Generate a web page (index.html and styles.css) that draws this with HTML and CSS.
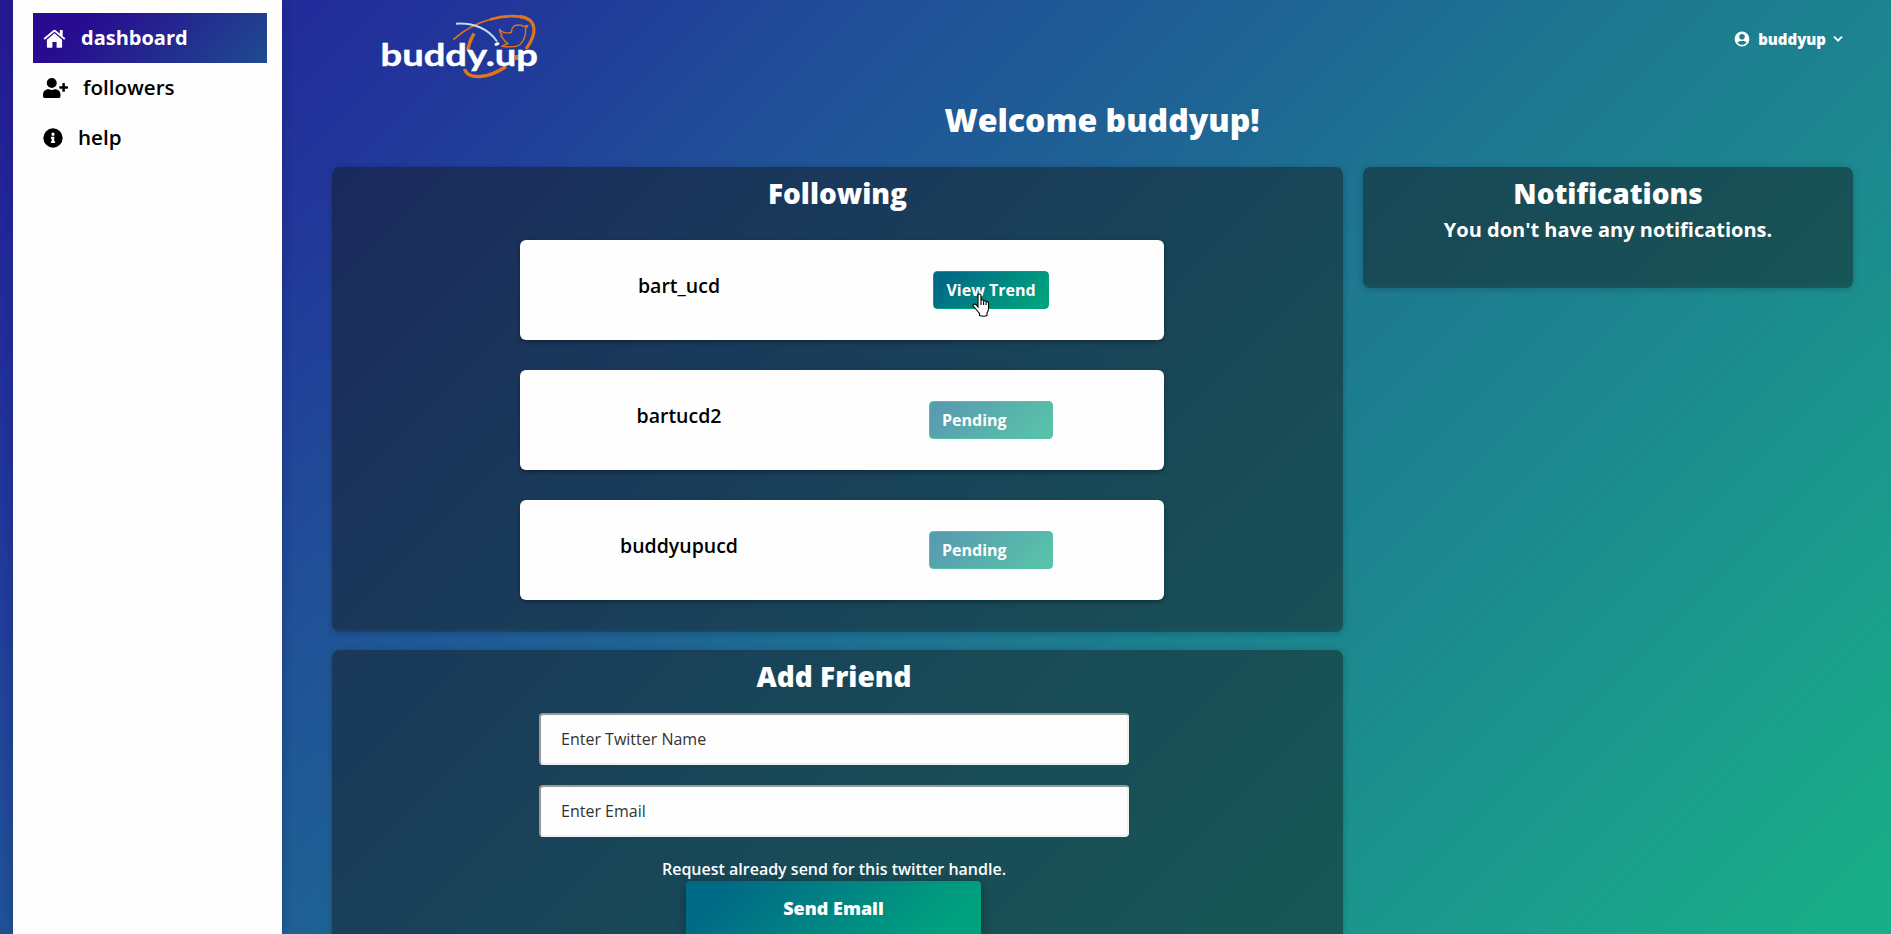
FILE: index.html
```html
<!DOCTYPE html>
<html lang="en">
<head>
<meta charset="utf-8">
<title>buddy.up</title>
<link rel="stylesheet" href="styles.css">
</head>
<body>
<div class="app">
  <nav class="sidebar">
    <a class="nav-item active"><svg class="home" viewBox="0 0 24 20"><path d="M12 4.600 4 11.400V19q0 .8.8.8h5v-6h4.400v6h5q.8 0 .8-.8v-7.600z"/><path d="M20.600 7.600V1h-3v4L13.300 1.300q-1.300-1-2.600 0L.5 9.800l1.300 1.600L12 2.900l10.200 8.500 1.300-1.600z"/></svg><span>dashboard</span></a>
    <a class="nav-item"><svg class="follow" viewBox="0 0 640 512"><path d="M624 208h-64v-64c0-8.800-7.200-16-16-16h-32c-8.800 0-16 7.200-16 16v64h-64c-8.800 0-16 7.200-16 16v32c0 8.800 7.200 16 16 16h64v64c0 8.800 7.200 16 16 16h32c8.800 0 16-7.200 16-16v-64h64c8.800 0 16-7.200 16-16v-32c0-8.800-7.200-16-16-16zM224 256a128 128 0 1 0 0-256 128 128 0 0 0 0 256zm89.600 32h-16.700a174 174 0 0 1-145.800 0h-16.700C60.200 288 0 348.200 0 422.400V464c0 26.500 21.500 48 48 48h352c26.500 0 48-21.500 48-48v-41.600c0-74.200-60.200-134.400-134.400-134.400z"/></svg><span>followers</span></a>
    <a class="nav-item"><svg class="info" viewBox="0 0 512 512"><path fill-rule="evenodd" d="M256 8a248 248 0 1 0 0 496 248 248 0 0 0 0-496zm0 110a42 42 0 1 1 0 84 42 42 0 0 1 0-84zm56 254c0 6.600-5.400 12-12 12h-88c-6.600 0-12-5.400-12-12v-24c0-6.600 5.400-12 12-12h12v-64h-12c-6.600 0-12-5.400-12-12v-24c0-6.600 5.400-12 12-12h64c6.600 0 12 5.400 12 12v100h12c6.600 0 12 5.400 12 12z"/></svg><span>help</span></a>
  </nav>
  <main class="content">
    <header class="topbar">
      <svg class="logo" viewBox="0 0 180 80">
        <g fill="none" stroke="#e0741f" stroke-linejoin="round">
          <path stroke-width="1.800" d="M13.300 39.700C25 29 40 22 52 19"/>
          <path stroke-width="2.600" d="M50 19.600C62 16 74 15.500 82 17"/>
          <path stroke-width="3.200" d="M80 16.600C98 19 97 34 86 49"/>
          <path stroke-width="3.500" d="M34 33.500C31 39 28.500 44 28 50M24.500 69C28 80 48 79 66 66.500M76.500 55v5"/>
          <path stroke-width="1.400" d="M59.600 29C61 32 65 33.500 71.500 32.500 71 27 75 24.500 79 25 82 25 83.500 26.500 84 26.500L88 25.500 85.500 28.500C86 36 84 41 80 44.500 76 48 68 47 62 46.200L68 43.500C65 42 64 40.500 63.500 39L61 36.500 62 35C60 33 59.500 31 59.600 29z"/>
        </g>
        <path fill="none" stroke="#b5e2f5" stroke-width="2" d="M16 23.700C34 22.500 49 29 57 41.500"/>
        <ellipse cx="57" cy="44" rx="2.600" ry="1.500" fill="#fff" transform="rotate(-20 57 44)"/>
        <text class="wordmark" x="-59.500" y="66" textLength="157.500" lengthAdjust="spacingAndGlyphs">buddy.up</text>
      </svg>
      <div class="user">
        <svg class="avatar" viewBox="0 0 16 16"><path fill-rule="evenodd" d="M8 .6a7.400 7.400 0 1 0 0 14.800A7.400 7.400 0 0 0 8 .6zM8 3a2.800 2.800 0 1 1 0 5.600A2.800 2.800 0 0 1 8 3zM3.500 11.500C4.500 10 6 9.900 8 9.900s3.500.1 4.500 1.600C11.500 13 9.800 13.800 8 13.800S4.500 13 3.500 11.500z"/></svg>
        <span>buddyup</span>
        <svg class="chevron" viewBox="0 0 10 8"><path d="M1 1.700l4 4 4-4"/></svg>
      </div>
    </header>
    <h1 class="welcome">Welcome buddyup!</h1>
    <div class="columns">
      <div class="primary">
        <section class="panel following">
          <h2>Following</h2>
          <ul class="friends">
            <li class="friend"><span class="name">bart_ucd</span><span class="action"><button class="btn">View Trend</button>
              <svg class="pointer" viewBox="0 0 18 24"><path d="M6 14V2.500Q6 1 7.400 1T9 2.500V8q0-1.200 1.300-1.200T11.600 8v.6q.2-1 1.300-.9t1.200 1.100v.6q.2-.9 1.200-.8t1.200 1.200V15q0 3-1.500 5v2.500Q12 24 7.500 22.500V20.500L5 17.500 1.300 13Q.7 11.500 2.200 11.200T4.500 12.200z"/><path d="M9 8v4M11.600 8.600V12M14.100 9.400V12"/></svg></span></li>
            <li class="friend"><span class="name">bartucd2</span><span class="action"><button class="btn pending" disabled>Pending</button></span></li>
            <li class="friend"><span class="name">buddyupucd</span><span class="action"><button class="btn pending" disabled>Pending</button></span></li>
          </ul>
        </section>
        <section class="panel add">
          <h2>Add Friend</h2>
          <form class="form">
            <input type="text" placeholder="Enter Twitter Name">
            <input type="text" placeholder="Enter Email">
            <p class="message">Request already send for this twitter handle.</p>
            <button class="send" type="button">Send Email</button>
          </form>
        </section>
      </div>
      <aside class="panel notifications">
        <h2>Notifications</h2>
        <p>You don't have any notifications.</p>
      </aside>
    </div>
  </main>
</div>
</body>
</html>
```
FILE: styles.css
```css
* { box-sizing: border-box; }
body {
  margin: 0;
  height: 934px;
  overflow: hidden;
  font-family: "Open Sans", sans-serif;
  background: linear-gradient(135deg, #251891 0%, #22299a 9%, #21369a 18%, #205098 32%, #1e6494 46%, #1d7890 58%, #1c858f 69%, #1a9e8c 87%, #18ae87 98%);
}
h1, h2, p, ul { margin: 0; padding: 0; }
.app { display: flex; height: 934px; padding-left: 13px; overflow: hidden; }

.sidebar {
  flex: none;
  width: 269px;
  padding: 13px 15px 0 20px;
  background: #fefefe;
  box-shadow: 0 0 10px rgba(20, 20, 60, .3);
}
.nav-item {
  display: flex;
  align-items: center;
  height: 50px;
  padding-left: 10px;
  font-size: 20.6px;
  font-weight: 600;
  color: #000;
}
.nav-item svg { fill: currentColor; flex: none; }
.nav-item span { position: relative; top: -1px; }
.nav-item.active {
  color: #fff;
  font-size: 20px;
  font-weight: 700;
  background: linear-gradient(135deg, #280b90 20%, #1e4c8f 100%);
}
.home { width: 23px; height: 19px; margin-right: 15px; }
.follow { width: 25px; height: 20px; margin-right: 15px; }
.info { width: 20px; height: 20px; margin-right: 15px; }

.content { flex: 1; min-width: 0; padding: 0 38px 0 50px; }
.topbar { display: flex; justify-content: space-between; height: 80px; }
.logo { width: 180px; height: 80px; margin-left: 108px; overflow: visible; }
.wordmark { font: 700 30px Lato, sans-serif; fill: #fff; stroke: #fff; stroke-width: .4; }
.user {
  display: flex;
  align-items: center;
  height: 78px;
  margin-right: 10px;
  color: #fff;
  font-size: 15px;
  font-weight: 800;
}
.avatar { width: 16px; height: 16px; margin-right: 8px; fill: #fff; }
.chevron { width: 10px; height: 8px; margin-left: 7px; fill: none; stroke: #fff; stroke-width: 1.9; }

.welcome {
  height: 87px;
  padding-top: 18px;
  margin: 0 -38px 0 -19px;
  font-size: 32px;
  line-height: 44px;
  font-weight: 800;
  text-align: center;
  color: #fff;
}
.columns { display: flex; align-items: flex-start; gap: 20px; }
.primary { width: 1011px; display: flex; flex-direction: column; gap: 18px; }
.panel {
  border-radius: 7px;
  background: rgba(20, 27, 30, .5);
  background-clip: padding-box;
  border-bottom: 3px solid rgba(22, 52, 60, .6);
  box-shadow: 0 1px 6px rgba(0, 0, 0, .2);
  color: #fff;
  text-align: center;
}
.panel h2 { padding-top: 7px; font-size: 28px; line-height: 38px; font-weight: 800; }
.following { height: 465px; }
.friends { width: 644px; margin: 28px auto 0 188px; display: flex; flex-direction: column; gap: 30px; }
.friend {
  display: grid;
  grid-template-columns: 318px 306px;
  height: 100px;
  background: #fefefe;
  border-radius: 6px;
  box-shadow: 0 2px 4px rgba(0, 0, 0, .35);
  text-align: center;
}
.name { padding-top: 32px; font-size: 19.5px; line-height: 27px; font-weight: 600; color: #000; }
.action { position: relative; padding-top: 31px; }
.btn {
  height: 38px;
  padding: 0 12px;
  border: 1px solid #00a27e;
  border-radius: 4px;
  background: linear-gradient(135deg, #006987 10%, #00a27e 90%);
  color: #fff;
  font: 700 16px/36px "Open Sans", sans-serif;
}
.btn.pending { width: 124px; text-align: left; opacity: .65; }
.pointer { position: absolute; left: 134px; top: 53px; width: 18px; height: 24px; fill: #fff; stroke: #000; stroke-width: 1.1; }
.add { height: 320px; }
.add h2 { margin-left: -7px; }
.form { display: flex; flex-direction: column; align-items: center; width: 590px; margin: 18px 0 0 207px; }
.form input {
  width: 590px;
  height: 52px;
  margin-bottom: 20px;
  padding: 0 20px;
  border: 2px solid #eee;
  border-top-color: #999;
  border-left-color: #999;
  border-radius: 4px;
  background: #fefefe;
  font: 400 16px "Open Sans", sans-serif;
}
.form input::placeholder { color: #333; opacity: 1; }
.message { margin-top: 1px; font-size: 16px; line-height: 23px; font-weight: 600; }
.send {
  width: 295px;
  height: 56px;
  margin-right: 1px;
  padding-bottom: 3px;
  border: 0;
  border-radius: 4px;
  background: linear-gradient(135deg, #006987 12%, #00a27e 88%);
  box-shadow: 0 2px 12px rgba(0, 0, 0, .3);
  color: #fff;
  font: 800 18px "Open Sans", sans-serif;
}
.notifications { width: 490px; height: 121px; }
.notifications p { padding-top: 2px; font-size: 20px; line-height: 32px; font-weight: 700; }
```
